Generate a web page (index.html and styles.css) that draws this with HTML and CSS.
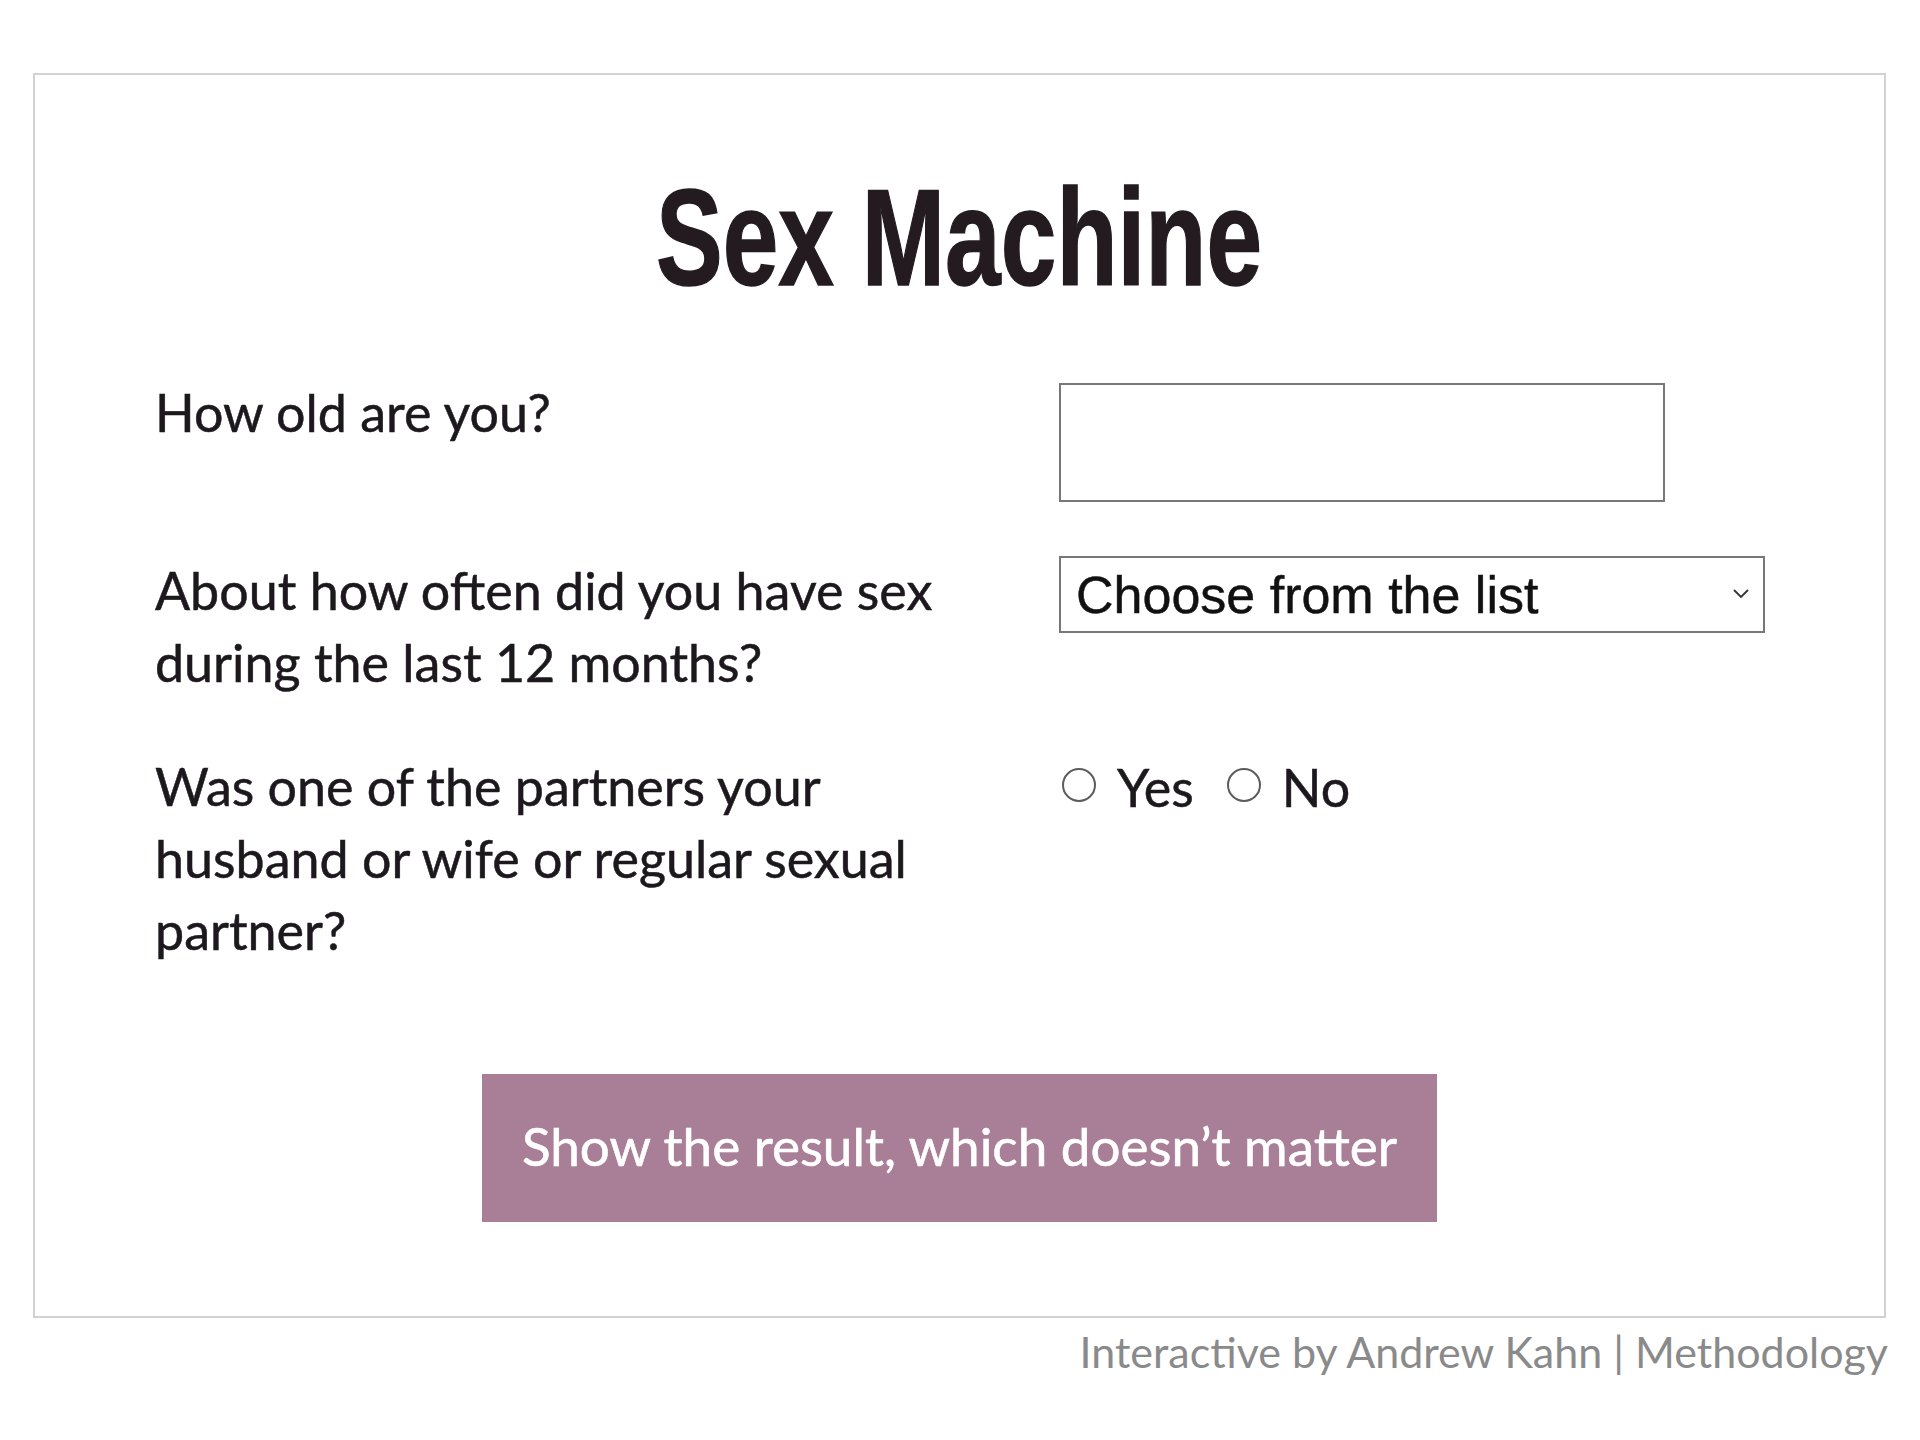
FILE: index.html
```html
<!DOCTYPE html>
<html lang="en">
<head>
<meta charset="utf-8">
<title>Sex Machine</title>
<link rel="stylesheet" href="styles.css">
</head>
<body>
<div class="page">
  <div class="card">
    <h1 class="title"><span class="title-text">Sex Machine</span></h1>
    <form class="quiz">
      <label class="q" for="age">How old are you?</label>
      <div class="a"><input id="age" class="text-input" type="text"></div>

      <label class="q" for="freq">About how often did you have sex during the last 12 months?</label>
      <div class="a a-select">
        <div class="select-wrap">
          <select id="freq" class="select">
            <option>Choose from the list</option>
          </select>
          <svg class="chev" width="20" height="14" viewBox="0 0 20 14" aria-hidden="true"><path d="M3 4 L10 11 L17 4" fill="none" stroke="#333" stroke-width="1.8"/></svg>
        </div>
      </div>

      <div class="q">Was one of the partners your husband or wife or regular sexual partner?</div>
      <div class="a radios">
        <input class="radio" type="radio" name="reg" id="yes"><label for="yes" class="rlabel">Yes</label>
        <input class="radio" type="radio" name="reg" id="no"><label for="no" class="rlabel">No</label>
      </div>
    </form>
    <div class="actions">
      <button class="btn" type="button">Show the result, which doesn’t matter</button>
    </div>
  </div>
  <div class="credit">Interactive by Andrew Kahn | Methodology</div>
</div>
</body>
</html>
```

FILE: styles.css
```css
html, body {
  margin: 0;
  padding: 0;
  background: #ffffff;
}

.page {
  padding: 73px 34px 0 33px;
}

.card {
  border: 2px solid #d2d2d2;
  padding: 0 120px 94px 120px;
}

.title {
  margin: 93px 0 0;
  text-align: center;
  font-family: "Liberation Sans", Arial, sans-serif;
  font-weight: 700;
  font-size: 138px;
  line-height: 138px;
  color: #231b20;
}

.title-text {
  display: inline-block;
  transform: scaleX(0.725);
  transform-origin: center;
  -webkit-text-stroke: 1.5px #231b20;
}

.quiz {
  margin-top: 71px;
  display: grid;
  grid-template-columns: 820px 1fr;
  column-gap: 84px;
  row-gap: 53px;
  align-items: start;
}

.q,
.a {
  font-family: Lato, "Open Sans", sans-serif;
  font-size: 52px;
  line-height: 72px;
  color: #1c181d;
  -webkit-text-stroke: 0.5px #1c181d;
}

.q {
  margin-top: -1px;
}

.text-input {
  display: block;
  box-sizing: border-box;
  margin-top: 6px;
  width: 606px;
  height: 119px;
  border: 2px solid #777777;
  border-radius: 0;
  background: #ffffff;
  padding: 0 12px;
  font-size: 50px;
  outline: none;
}

.select-wrap {
  position: relative;
  margin-top: 1px;
  width: 706px;
}

.select {
  display: block;
  box-sizing: border-box;
  width: 706px;
  height: 77px;
  -webkit-appearance: none;
  appearance: none;
  border: 2px solid #777777;
  border-radius: 0;
  background: #ffffff;
  padding: 0 0 0 15px;
  font-family: "Liberation Sans", Arial, sans-serif;
  font-size: 52px;
  color: #111111;
  outline: none;
}

.chev {
  position: absolute;
  right: 14px;
  top: 30px;
  pointer-events: none;
}

.radios {
  display: flex;
  align-items: flex-start;
}

.radio {
  -webkit-appearance: none;
  appearance: none;
  box-sizing: border-box;
  flex: none;
  width: 34px;
  height: 34px;
  margin: 17px 21px 0 3px;
  border: 2px solid #5c5c5c;
  border-radius: 50%;
  background: #ffffff;
}

.rlabel {
  margin-right: 30px;
}

.rlabel:last-child {
  margin-right: 0;
}

.actions {
  margin-top: 108px;
  display: flex;
  justify-content: center;
}

.btn {
  box-sizing: border-box;
  width: 955px;
  height: 148px;
  border: none;
  border-radius: 0;
  background: #a97e97;
  color: #ffffff;
  font-family: Lato, "Open Sans", sans-serif;
  font-size: 53px;
  -webkit-text-stroke: 0.6px #ffffff;
  padding: 0 0 6px;
  cursor: pointer;
}

.credit {
  margin-top: 9px;
  margin-right: -2px;
  text-align: right;
  font-family: Lato, "Open Sans", sans-serif;
  font-size: 43px;
  line-height: 50px;
  color: #8a8a8a;
}
```
